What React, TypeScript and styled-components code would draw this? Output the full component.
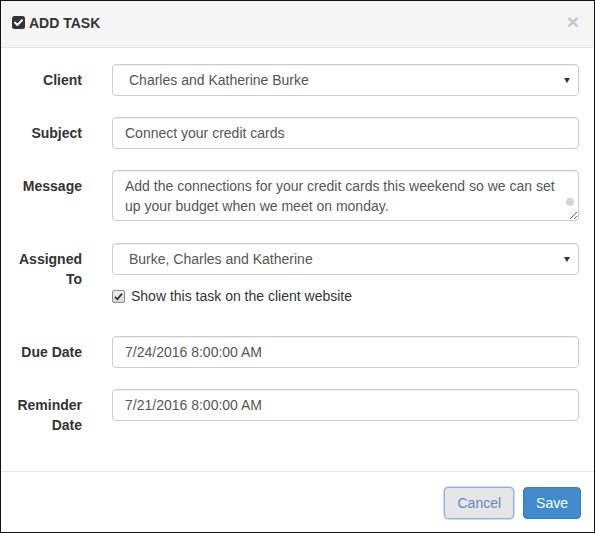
import styled, { createGlobalStyle } from "styled-components"

const GlobalStyle = createGlobalStyle`
html, body {
margin: 0;
padding: 0;
background: #fff;
}
body {
font-family: "Liberation Sans", Arial, sans-serif;
font-size: 14px;
line-height: 20px;
color: #333;
}
* {
box-sizing: border-box;
}
`

const App = () => {
    return (
        <>
            <GlobalStyle />
            <Modal>
                <Header>
                    <Title>
                        <TitleIcon viewBox="0 0 13 13">
                            <rect x="0" y="0" width="13" height="13" rx="2.5" fill="#333" />
                            <path d="M3 6.6 L5.4 9 L10 4.2" fill="none" stroke="#fff" strokeWidth="2" strokeLinecap="round" strokeLinejoin="round" />
                        </TitleIcon>
                        ADD TASK
                    </Title>
                    <Close>×</Close>
                </Header>

                <Body>
                    <Group>
                        <Label>Client</Label>
                        <Control>
                            <SelectWrap>
                                <Select defaultValue="1">
                                    <option value="1">Charles and Katherine Burke</option>
                                </Select>
                            </SelectWrap>
                        </Control>
                    </Group>

                    <Group>
                        <Label>Subject</Label>
                        <Control>
                            <Input defaultValue="Connect your credit cards" />
                        </Control>
                    </Group>

                    <Group $gap={22}>
                        <Label>Message</Label>
                        <Control>
                            <AreaWrap>
                                <TextArea
                                    rows={2}
                                    defaultValue="Add the connections for your credit cards this weekend so we can set up your budget when we meet on monday."
                                />
                            </AreaWrap>
                        </Control>
                    </Group>

                    <Group $gap={30}>
                        <Label>Assigned To</Label>
                        <Control>
                            <SelectWrap>
                                <Select defaultValue="1">
                                    <option value="1">Burke, Charles and Katherine</option>
                                </Select>
                            </SelectWrap>
                            <CheckRow>
                                <CheckBox>
                                    <svg width="9" height="9" viewBox="0 0 9 9">
                                        <path d="M1 4.8 L3.4 7.2 L8 1.6" fill="none" stroke="#333" strokeWidth="1.8" />
                                    </svg>
                                </CheckBox>
                                Show this task on the client website
                            </CheckRow>
                        </Control>
                    </Group>

                    <Group>
                        <Label>Due Date</Label>
                        <Control>
                            <Input defaultValue="7/24/2016 8:00:00 AM" />
                        </Control>
                    </Group>

                    <Group>
                        <Label>Reminder Date</Label>
                        <Control>
                            <Input defaultValue="7/21/2016 8:00:00 AM" />
                        </Control>
                    </Group>
                </Body>

                <Footer>
                    <Button $kind="cancel">Cancel</Button>
                    <Button $kind="primary">Save</Button>
                </Footer>
            </Modal>
        </>
    )
}

export default App

const Modal = styled.div`
width: 595px;
height: 533px;
border: 1px solid #111;
background: #fff;
display: flex;
flex-direction: column;
`

const Header = styled.div`
height: 47px;
flex-shrink: 0;
background: #f5f5f5;
border-bottom: 1px solid #e5e5e5;
display: flex;
align-items: center;
justify-content: space-between;
padding: 0 15px 0 11px;
`

const Title = styled.div`
display: flex;
align-items: center;
gap: 4px;
font-weight: bold;
font-size: 14px;
color: #333;
margin-top: -3px;
`

const TitleIcon = styled.svg`
width: 13px;
height: 13px;
`

const Close = styled.div`
font-size: 21px;
font-weight: bold;
line-height: 1;
color: #000;
opacity: 0.2;
margin-top: -5px;
`

const Body = styled.div`
flex: 1;
padding: 16px 15px 0 15px;
`

const Group = styled.div<{ $gap?: number }>`
display: flex;
gap: 30px;
margin-bottom: ${p => p.$gap ?? 21}px;
`

const Label = styled.div`
width: 66px;
flex-shrink: 0;
text-align: right;
font-weight: bold;
padding-top: 6px;
line-height: 20px;
color: #333;
`

const Control = styled.div`
flex: 1;
min-width: 0;
`

const Input = styled.input`
display: block;
width: 100%;
height: 32px;
padding: 5px 12px;
font-family: inherit;
font-size: 14px;
line-height: 20px;
color: #555;
background: #fff;
border: 1px solid #ccc;
border-radius: 4px;
box-shadow: inset 0 1px 1px rgba(0, 0, 0, 0.075);
outline: none;
`

const SelectWrap = styled.div`
position: relative;

&::after {
content: "";
position: absolute;
right: 9px;
top: 14px;
border-left: 3.5px solid transparent;
border-right: 3.5px solid transparent;
border-top: 5px solid #333;
pointer-events: none;
}
`

const Select = styled.select`
display: block;
width: 100%;
height: 32px;
padding: 5px 12px 5px 16px;
font-family: inherit;
font-size: 14px;
line-height: 20px;
color: #555;
background: #fff;
border: 1px solid #ccc;
border-radius: 4px;
box-shadow: inset 0 1px 1px rgba(0, 0, 0, 0.075);
appearance: none;
outline: none;
`

const AreaWrap = styled.div`
position: relative;

&::after {
content: "";
position: absolute;
right: 5px;
top: 28px;
width: 8px;
height: 8px;
border-radius: 50%;
background: #d4d4d4;
pointer-events: none;
}
`

const TextArea = styled.textarea`
display: block;
width: 100%;
height: 51px;
padding: 5px 12px;
font-family: inherit;
font-size: 14px;
line-height: 20px;
color: #555;
background: #fff;
border: 1px solid #ccc;
border-radius: 4px;
box-shadow: inset 0 1px 1px rgba(0, 0, 0, 0.075);
resize: vertical;
overflow: hidden;
outline: none;
`

const CheckRow = styled.div`
display: flex;
align-items: center;
gap: 6px;
margin-top: 11px;
line-height: 20px;
color: #333;
`

const CheckBox = styled.span`
width: 13px;
height: 13px;
border: 1px solid #8c8c8c;
border-radius: 2px;
background: linear-gradient(#eee, #d8d8d8);
display: flex;
align-items: center;
justify-content: center;
`

const Footer = styled.div`
flex-shrink: 0;
border-top: 1px solid #e5e5e5;
padding: 15px 13px 13px 15px;
display: flex;
justify-content: flex-end;
gap: 9px;
`

const Button = styled.button<{ $kind: "cancel" | "primary" }>`
height: 32px;
padding: 5px 12px;
font-family: inherit;
font-size: 14px;
line-height: 20px;
border-radius: 4px;
border: 1px solid ${p => (p.$kind === "primary" ? "#357ebd" : "#8fb0e2")};
background: ${p => (p.$kind === "primary" ? "#428bca" : "#e6e6e6")};
color: ${p => (p.$kind === "primary" ? "#fff" : "#5d86c2")};
box-shadow: ${p => (p.$kind === "primary" ? "none" : "0 0 0 1px rgba(120, 160, 220, 0.35)")};
cursor: pointer;
`
